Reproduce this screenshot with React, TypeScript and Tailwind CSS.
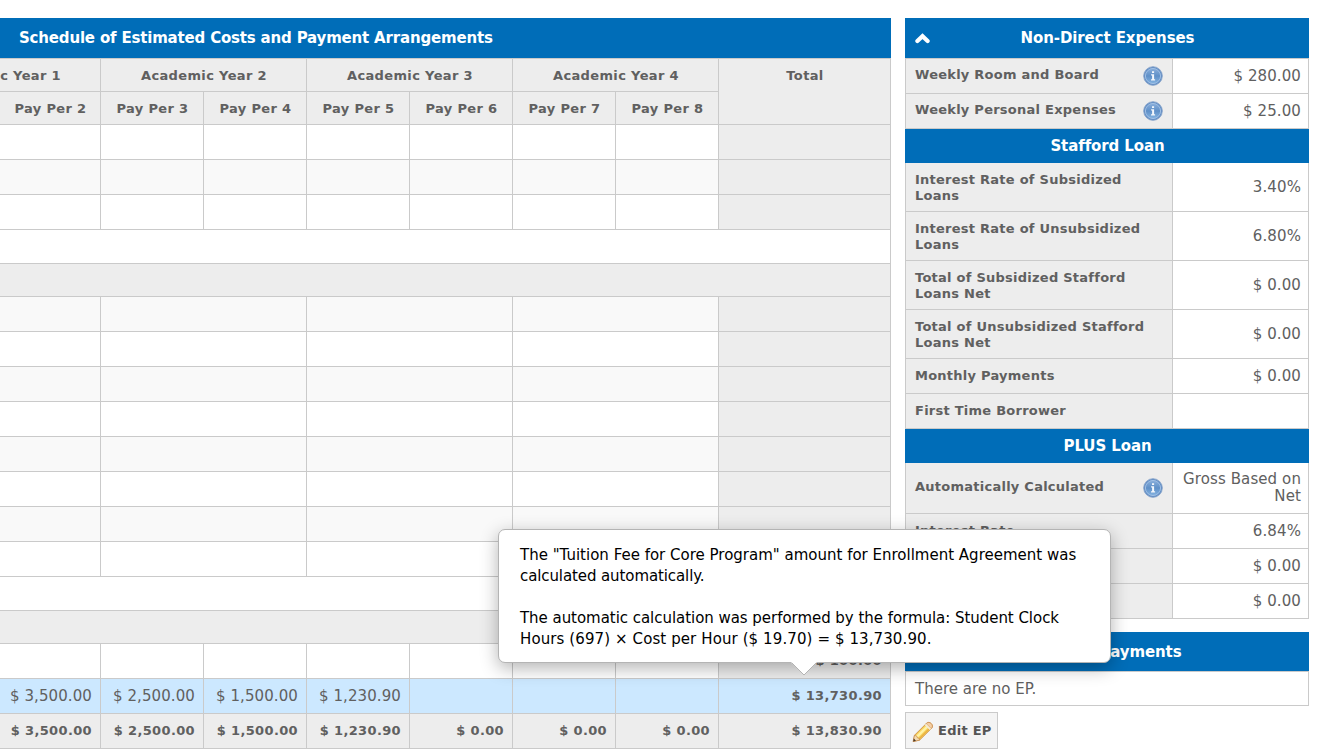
import clsx from 'clsx';

interface ScheduleRow {
  kind: 'periods' | 'years';
  tone: string;
  total?: string;
  totalTone?: string;
  values?: string[];
  bold?: boolean;
}

const periods = ['Pay Per 2', 'Pay Per 3', 'Pay Per 4', 'Pay Per 5', 'Pay Per 6', 'Pay Per 7', 'Pay Per 8'];

const costRows: ScheduleRow[] = [
  { kind: 'periods', tone: 'bg-white' },
  { kind: 'periods', tone: 'bg-[#f9f9f9]' },
  { kind: 'periods', tone: 'bg-white' },
];

const fundingRows: ScheduleRow[] = Array.from({ length: 8 }, (_, i) => ({
  kind: 'years',
  tone: i % 2 === 0 ? 'bg-[#f9f9f9]' : 'bg-white',
}));

const paymentRows: ScheduleRow[] = [
  { kind: 'periods', tone: 'bg-white', total: '$ 100.00' },
  {
    kind: 'periods',
    tone: 'bg-[#cce8ff]',
    totalTone: 'bg-[#cce8ff]',
    values: ['$ 3,500.00', '$ 2,500.00', '$ 1,500.00', '$ 1,230.90'],
    total: '$ 13,730.90',
  },
  {
    kind: 'periods',
    tone: 'bg-[#ededed]',
    values: ['$ 3,500.00', '$ 2,500.00', '$ 1,500.00', '$ 1,230.90', '$ 0.00', '$ 0.00', '$ 0.00'],
    total: '$ 13,830.90',
    bold: true,
  },
];

const cell = 'border-r border-b border-[#cacaca]';
const boldText = 'text-[13px] font-bold tracking-[0.35px]';

function Row({ row }: { row: ScheduleRow }) {
  const count = row.kind === 'periods' ? 7 : 4;
  return (
    <>
      {Array.from({ length: count }, (_, i) => (
        <div
          key={i}
          className={clsx(
            cell,
            row.tone,
            'flex h-[35px] items-center justify-end pr-2 whitespace-nowrap',
            row.kind === 'years' && i > 0 && 'col-span-2',
            row.bold ? boldText : 'text-[15px] tracking-[0.1px]'
          )}
        >
          {row.values?.[i]}
        </div>
      ))}
      <div className={clsx(cell, boldText, row.totalTone ?? 'bg-[#ededed]', 'flex h-[35px] items-center justify-end pr-2')}>
        {row.total}
      </div>
    </>
  );
}

function Band({ gray }: { gray?: boolean }) {
  return <div className={clsx(cell, 'col-span-8', gray ? 'h-[33px] bg-[#ededed]' : 'h-[34px] bg-white')} />;
}

function Schedule() {
  return (
    <div className="w-[891px] shrink-0">
      <div className="flex h-10 items-center bg-[#006db8] pl-[19px] text-[15px] font-bold tracking-[-0.18px] text-white">
        Schedule of Estimated Costs and Payment Arrangements
      </div>
      <div className="grid grid-cols-[101px_repeat(6,103px)_172px] border-t border-[#cacaca]">
        <div className={clsx(cell, boldText, 'flex h-[33px] items-center justify-end overflow-hidden bg-[#ededed] pt-[2px] pr-[39px] whitespace-nowrap')}>
          Academic Year 1
        </div>
        {[2, 3, 4].map((year) => (
          <div key={year} className={clsx(cell, boldText, 'col-span-2 flex h-[33px] items-center justify-center bg-[#ededed] pt-[2px] pl-px')}>
            Academic Year {year}
          </div>
        ))}
        <div className={clsx(cell, boldText, 'row-span-2 bg-[#ededed] pt-[7px] pl-px text-center')}>Total</div>
        {periods.map((p) => (
          <div key={p} className={clsx(cell, boldText, 'flex h-[33px] items-center justify-center bg-[#ededed] pt-[2px] pl-px')}>
            {p}
          </div>
        ))}
        {costRows.map((row, i) => (
          <Row key={i} row={row} />
        ))}
        <Band />
        <Band gray />
        {fundingRows.map((row, i) => (
          <Row key={i} row={row} />
        ))}
        <Band />
        <Band gray />
        {paymentRows.map((row, i) => (
          <Row key={i} row={row} />
        ))}
      </div>
    </div>
  );
}

function InfoIcon() {
  return (
    <svg className="-mt-px h-5 w-5 shrink-0" viewBox="0 0 20 20">
      <defs>
        <linearGradient id="infoFill" x1="0" y1="0" x2="0" y2="1">
          <stop offset="0" stopColor="#8aafdb" />
          <stop offset="0.5" stopColor="#5f90c8" />
          <stop offset="1" stopColor="#85b3e0" />
        </linearGradient>
      </defs>
      <circle cx="10" cy="10" r="9.3" fill="#5f8cc4" stroke="#86a3ca" strokeWidth="0.9" />
      <circle cx="10" cy="10" r="7.6" fill="url(#infoFill)" stroke="#a5c3e6" strokeWidth="0.9" />
      <path d="M9 5.200h2.100v1.800H9zM8.100 8.300h3v4.900h1v1.200H8v-1.200h1.100V9.500h-1z" fill="#f3f7fc" />
    </svg>
  );
}

function PencilIcon() {
  return (
    <svg className="mt-[2px] h-[22px] w-[22px] shrink-0" viewBox="0 0 22 22">
      <path d="M1.200 20.500 2.500 14.300 14.600 2.200c1.300-1.200 3.200-1 4.600.4s1.600 3.300.4 4.600L7.600 19.100z" fill="#f8d35c" stroke="#cc8d42" strokeWidth="0.9" strokeLinejoin="round" />
      <path d="M4.200 14.800 14.700 4.400l1.800 1.700L6 16.600z" fill="#fff2a6" />
      <path d="M6.500 17.500 17 7l.9.9L7.500 18.300z" fill="#eab040" />
      <path d="m14.100 2.700.5-.5c1.300-1.200 3.200-1 4.600.4s1.600 3.300.4 4.600l-.5.500z" fill="#f5cfa4" stroke="#c58a52" strokeWidth="0.7" />
      <path d="m12.700 4.100 5 5 1.400-1.400-5-5z" fill="#f3ead6" />
      <path d="M1.200 20.500 2.500 14.300l2.100.7.900 1.900 1.700.5.400 1.700z" fill="#f4dbb0" stroke="#bd8249" strokeWidth="0.6" />
      <path d="m1.200 20.500.6-2.900 2.200 2.100z" fill="#4a3828" />
    </svg>
  );
}

interface LoanRowProps {
  label: string;
  value?: string;
  info?: boolean;
  tall?: boolean;
  height?: string;
}

function LoanRow({ label, value, info, tall, height = 'h-[35px]' }: LoanRowProps) {
  return (
    <div className={clsx('flex border-b border-[#cacaca]', tall ? 'h-[49px]' : height)}>
      <div className="flex w-[268px] shrink-0 items-center justify-between border-x border-[#cacaca] bg-[#ededed] px-[9px]">
        <span
          className={clsx(
            'text-[13px] leading-4 font-bold tracking-[0.25px]',
            info ? '-mt-[2px]' : 'max-w-[235px]',
            tall && 'pt-[2px]'
          )}
        >
          {label}
        </span>
        {info && <InfoIcon />}
      </div>
      <div className="flex flex-1 items-center justify-end border-r border-[#cacaca] pr-[7px] pl-2 text-right text-[15px] leading-[17px] tracking-[0.1px]">
        {value}
      </div>
    </div>
  );
}

function SectionTitle({ children }: { children: string }) {
  return (
    <div className="flex h-[34px] items-center justify-center bg-[#006db8] pl-px text-[15px] font-bold tracking-[-0.1px] text-white">
      {children}
    </div>
  );
}

function Sidebar() {
  return (
    <div className="w-[404px] shrink-0">
      <div className="flex h-10 items-center bg-[#006db8] text-[15px] font-bold tracking-[-0.1px] text-white">
        <svg className="ml-[10px] h-[11px] w-[15px]" viewBox="0 0 15 11">
          <path d="M2.400 8 7.500 3.200 12.600 8" fill="none" stroke="#fff" strokeWidth="4.200" strokeLinecap="round" />
        </svg>
        <span className="flex-1 pr-[24px] text-center">Non-Direct Expenses</span>
      </div>
      <div className="border-t border-[#cacaca]">
        <LoanRow label="Weekly Room and Board" value="$ 280.00" info />
        <LoanRow label="Weekly Personal Expenses" value="$ 25.00" info />
      </div>
      <SectionTitle>Stafford Loan</SectionTitle>
      <LoanRow label="Interest Rate of Subsidized Loans" value="3.40%" tall />
      <LoanRow label="Interest Rate of Unsubsidized Loans" value="6.80%" tall />
      <LoanRow label="Total of Subsidized Stafford Loans Net" value="$ 0.00" tall />
      <LoanRow label="Total of Unsubsidized Stafford Loans Net" value="$ 0.00" tall />
      <LoanRow label="Monthly Payments" value="$ 0.00" />
      <LoanRow label="First Time Borrower" />
      <SectionTitle>PLUS Loan</SectionTitle>
      <LoanRow label="Automatically Calculated" value="Gross Based on Net" info height="h-[51px]" />
      <LoanRow label="Interest Rate" value="6.84%" />
      <LoanRow label="Total Net" value="$ 0.00" />
      <LoanRow label="Payments" value="$ 0.00" />

      <div className="mt-[13px] flex h-[39px] items-center justify-center bg-[#006db8] pt-px pr-[15px] text-[15px] font-bold tracking-[-0.1px] text-white">
        Expected Payments
      </div>
      <div className="flex h-[35px] items-center border border-[#cacaca] pt-px pl-[9px] text-[15px]">There are no EP.</div>
      <button className="mt-[6px] flex h-[37px] w-[93px] items-center gap-1 border border-[#cacaca] bg-[#f4f4f4] pl-[6px] text-[13px] font-bold tracking-[0.25px] whitespace-nowrap text-[#555]">
        <PencilIcon />
        Edit EP
      </button>
    </div>
  );
}

function FormulaTooltip() {
  return (
    <div className="absolute top-[529px] left-[498px] h-[134px] w-[613px] rounded-[7px] border border-[#b4b4b4] bg-white pt-[15px] pl-[21px] text-[15px] leading-[21px] text-black shadow-[0_5px_18px_rgba(0,0,0,0.3)]">
      <p className="whitespace-nowrap">
        The "Tuition Fee for Core Program" amount for Enrollment Agreement was
        <br />
        <span className="tracking-[-0.1px]">calculated automatically.</span>
      </p>
      <p className="mt-[21px] whitespace-nowrap">
        <span className="tracking-[-0.04px]">The automatic calculation was performed by the formula: Student Clock</span>
        <br />
        <span className="tracking-[0.1px]">Hours (697) × Cost per Hour ($ 19.70) = $ 13,730.90.</span>
      </p>
      <svg className="absolute top-[131px] left-[291px] h-[15px] w-[28px]" viewBox="0 0 28 15">
        <path d="M1 0v1.500L14 14 27 1.500V0z" fill="#fff" />
        <path d="M1.500 1.500 14 14 26.500 1.500" fill="none" stroke="#b4b4b4" />
      </svg>
    </div>
  );
}

export default function App() {
  return (
    <div className="relative h-[755px] w-[1321px] overflow-hidden bg-white font-['Verdana','DejaVu_Sans',sans-serif] text-[#606060]">
      <div className="flex gap-[14px] pt-[18px]">
        <Schedule />
        <Sidebar />
      </div>
      <FormulaTooltip />
    </div>
  );
}
